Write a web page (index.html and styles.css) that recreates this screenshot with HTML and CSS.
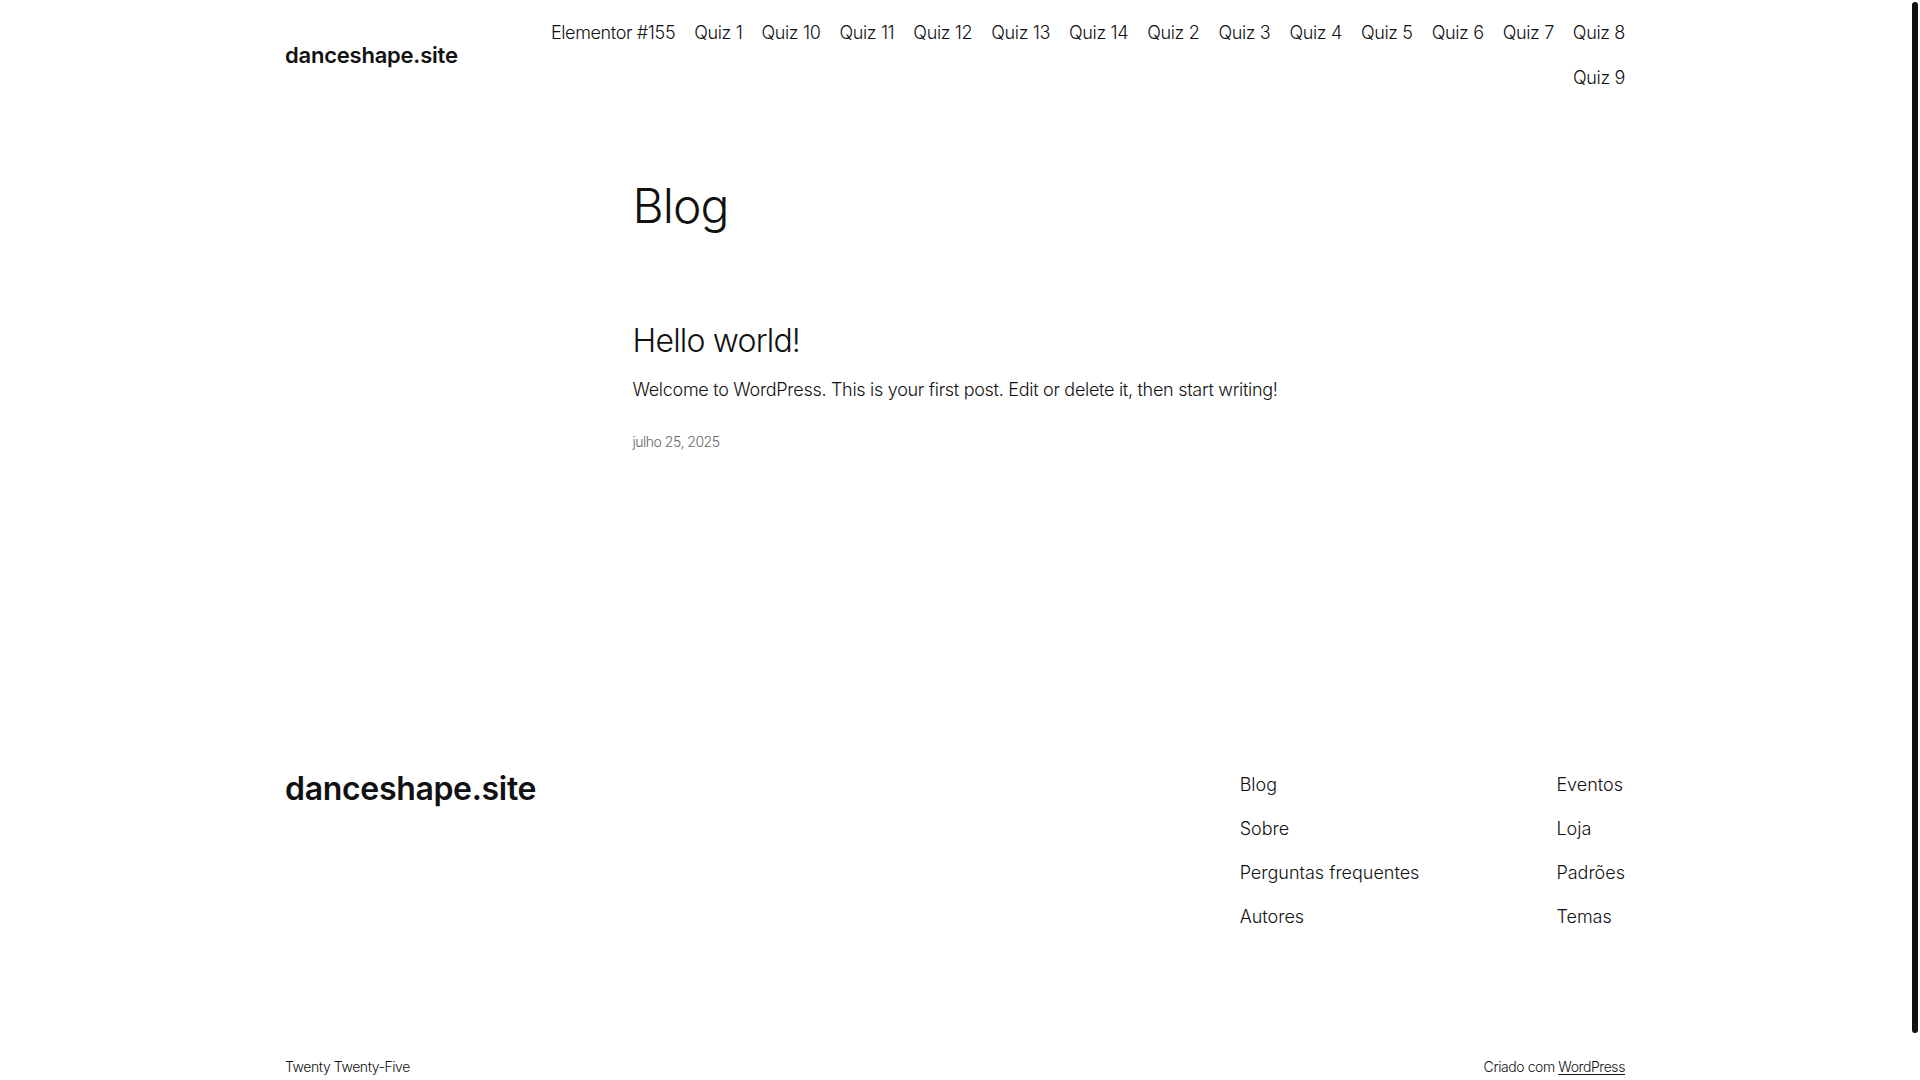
FILE: index.html
```html
<!DOCTYPE html>
<html lang="pt-BR">
<head>
<meta charset="utf-8">
<title>Blog – danceshape.site</title>
<link rel="stylesheet" href="styles.css">
</head>
<body>
<header class="site-header">
  <div class="wrap header-inner">
    <a class="site-title" href="#">danceshape.site</a>
    <nav class="main-nav">
      <ul>
        <li><a href="#">Elementor #155</a></li>
        <li><a href="#">Quiz 1</a></li>
        <li><a href="#">Quiz 10</a></li>
        <li><a href="#">Quiz 11</a></li>
        <li><a href="#">Quiz 12</a></li>
        <li><a href="#">Quiz 13</a></li>
        <li><a href="#">Quiz 14</a></li>
        <li><a href="#">Quiz 2</a></li>
        <li><a href="#">Quiz 3</a></li>
        <li><a href="#">Quiz 4</a></li>
        <li><a href="#">Quiz 5</a></li>
        <li><a href="#">Quiz 6</a></li>
        <li><a href="#">Quiz 7</a></li>
        <li><a href="#">Quiz 8</a></li>
        <li><a href="#">Quiz 9</a></li>
      </ul>
    </nav>
  </div>
</header>

<main class="site-main">
  <h1 class="page-title">Blog</h1>
  <article class="post">
    <h2 class="post-title"><a href="#">Hello world!</a></h2>
    <p class="excerpt">Welcome to WordPress. This is your first post. Edit or delete it, then start writing!</p>
    <time class="post-date">julho 25, 2025</time>
  </article>
</main>

<footer class="site-footer">
  <div class="wrap footer-top">
    <a class="footer-title" href="#">danceshape.site</a>
    <div class="footer-navs">
      <ul class="footer-col">
        <li><a href="#">Blog</a></li>
        <li><a href="#">Sobre</a></li>
        <li><a href="#">Perguntas frequentes</a></li>
        <li><a href="#">Autores</a></li>
      </ul>
      <ul class="footer-col">
        <li><a href="#">Eventos</a></li>
        <li><a href="#">Loja</a></li>
        <li><a href="#">Padrões</a></li>
        <li><a href="#">Temas</a></li>
      </ul>
    </div>
  </div>
  <div class="wrap footer-bottom">
    <p>Twenty Twenty-Five</p>
    <p>Criado com <a href="#">WordPress</a></p>
  </div>
</footer>

<div class="scroll-thumb" aria-hidden="true"></div>
</body>
</html>
```

FILE: styles.css
```css
body {
  margin: 0 10px 0 0;
  background: #ffffff;
  color: #111111;
  font-family: Inter, "Noto Sans", sans-serif;
  font-weight: 300;
}

a {
  color: inherit;
  text-decoration: none;
}

ul {
  list-style: none;
  margin: 0;
  padding: 0;
}

.wrap {
  max-width: 1340px;
  margin: 0 auto;
}

/* Fake overlay scrollbar thumb, as in the reference */
.scroll-thumb {
  position: fixed;
  top: 2px;
  right: 2px;
  width: 6px;
  height: 1031px;
  background: #111111;
  border-radius: 3px;
}

/* Header */
.site-header {
  padding: 19px 0 17px;
}

.header-inner {
  display: flex;
  align-items: center;
  justify-content: space-between;
  gap: 40px;
}

.site-title {
  font-size: 22px;
  line-height: 1.2;
  font-weight: 600;
  letter-spacing: -0.01em;
  white-space: nowrap;
}

.main-nav ul {
  display: flex;
  flex-wrap: wrap;
  justify-content: flex-end;
  column-gap: 19px;
  row-gap: 18px;
  max-width: 1100px;
  margin-left: auto;
}

.main-nav a {
  display: block;
  font-size: 18px;
  line-height: 27px;
  letter-spacing: -0.02em;
}

/* Main */
.site-main {
  max-width: 645px;
  margin: 0 auto;
  padding: 71px 0 319px;
}

.page-title {
  margin: 0;
  font-size: 48px;
  line-height: 54px;
  font-weight: 300;
  letter-spacing: -0.02em;
}

.post {
  margin-top: 89px;
}

.post-title {
  margin: 0;
  font-size: 32px;
  line-height: 1.2;
  font-weight: 300;
  letter-spacing: -0.025em;
}

.excerpt {
  margin: 16px 0 0;
  font-size: 18px;
  line-height: 28.8px;
  letter-spacing: -0.016em;
  white-space: nowrap;
}

.post-date {
  display: block;
  margin-top: 27px;
  font-size: 14px;
  line-height: 19.6px;
  letter-spacing: -0.035em;
  color: #686868;
}

/* Footer */
.site-footer {
  padding-bottom: 51px;
}

.footer-top {
  display: flex;
  align-items: flex-start;
  justify-content: space-between;
}

.footer-title {
  margin-top: 1px;
  font-size: 32px;
  line-height: 33px;
  font-weight: 600;
  letter-spacing: -0.01em;
}

.footer-navs {
  display: flex;
  gap: 137px;
}

.footer-col {
  display: flex;
  flex-direction: column;
  gap: 17px;
}

.footer-col a {
  display: block;
  font-size: 18px;
  line-height: 27px;
}

.footer-bottom {
  display: flex;
  justify-content: space-between;
  margin-top: 127px;
  font-size: 14px;
  line-height: 19.6px;
  letter-spacing: -0.03em;
}

.footer-bottom p {
  margin: 0;
}

.footer-bottom a {
  text-decoration: underline;
  text-underline-offset: 2px;
}
```
